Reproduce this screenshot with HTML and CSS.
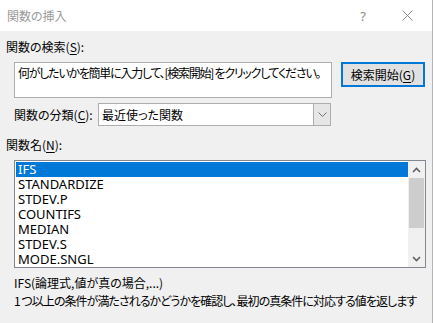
FILE: index.html
```html
<!DOCTYPE html>
<html lang="ja">
<head>
<meta charset="utf-8">
<title>関数の挿入</title>
<link rel="stylesheet" href="styles.css">
</head>
<body>
<div class="dialog">
  <div class="titlebar">
    <span class="title">関数の挿入</span>
    <span class="help">?</span>
    <span class="close">
      <svg width="11" height="11" viewBox="0 0 11 11"><path d="M0.5 0.5 L10.5 10.5 M10.5 0.5 L0.5 10.5" stroke="#8a8a8a" stroke-width="1" fill="none"/></svg>
    </span>
  </div>
  <div class="content">
    <div class="label">関数の検索(<u>S</u>):</div>
    <div class="search-row">
      <div class="textarea">何がしたいかを簡単に入力して、[検索開始] をクリックしてください。</div>
      <div class="button">検索開始(<u>G</u>)</div>
    </div>
    <div class="category-row">
      <span class="cat-label">関数の分類(<u>C</u>):</span>
      <div class="select">
        <span class="select-value">最近使った関数</span>
        <span class="select-btn">
          <svg width="9" height="6" viewBox="0 0 9 6"><path d="M0.5 0.5 L4.5 4.5 L8.5 0.5" stroke="#707070" stroke-width="1" fill="none"/></svg>
        </span>
      </div>
    </div>
    <div class="label label-list">関数名(<u>N</u>):</div>
    <div class="listbox">
      <ul class="items">
        <li class="selected">IFS</li>
        <li>STANDARDIZE</li>
        <li>STDEV.P</li>
        <li>COUNTIFS</li>
        <li>MEDIAN</li>
        <li>STDEV.S</li>
        <li>MODE.SNGL</li>
      </ul>
      <div class="scrollbar">
        <div class="arrow">
          <svg width="9" height="6" viewBox="0 0 9 6"><path d="M1 5 L4.5 1.5 L8 5" stroke="#606060" stroke-width="1.6" fill="none"/></svg>
        </div>
        <div class="thumb"></div>
        <div class="track"></div>
        <div class="arrow">
          <svg width="9" height="6" viewBox="0 0 9 6"><path d="M1 1 L4.5 4.5 L8 1" stroke="#606060" stroke-width="1.6" fill="none"/></svg>
        </div>
      </div>
    </div>
    <div class="desc">
      <div class="syntax">IFS(論理式,値が真の場合,...)</div>
      <div class="explain">1 つ以上の条件が満たされるかどうかを確認し、最初の真条件に対応する値を返します</div>
    </div>
  </div>
</div>
</body>
</html>
```

FILE: styles.css
```css
* { box-sizing: border-box; }
html, body {
  margin: 0;
  padding: 0;
  background: #f0f0f0;
}
body {
  font-family: "Noto Sans CJK JP", "Noto Sans", sans-serif;
  font-size: 12px;
  color: #000;
  font-feature-settings: "palt";
}
u { text-underline-offset: 2px; }
.dialog {
  width: 433px;
  height: 323px;
  background: #f0f0f0;
  border-right: 1px solid #b4b4b4;
  overflow: hidden;
}
.titlebar {
  height: 31px;
  background: #fff;
  display: flex;
  align-items: center;
  padding-left: 7px;
}
.title {
  color: #9a9a9a;
  line-height: 16px;
}
.help {
  margin-left: auto;
  color: #8a8a8a;
  font-family: "Noto Sans", sans-serif;
  font-size: 13px;
  margin-right: 36px;
}
.close {
  display: flex;
  margin-right: 19px;
}
.content {
  padding: 0 6px;
}
.label {
  margin-top: 8px;
  line-height: 16px;
  height: 16px;
}
.label-list {
  margin-top: 11px;
}
.search-row {
  display: flex;
  align-items: flex-start;
  margin-top: 7px;
  margin-left: 8px;
  gap: 9px;
}
.textarea {
  width: 318px;
  height: 36px;
  background: #fff;
  border: 1px solid #abadb3;
  padding: 2px 3px;
  line-height: 16px;
  white-space: nowrap;
  overflow: hidden;
  letter-spacing: -1.25px;
}
.button {
  width: 84px;
  height: 25px;
  background: #e1e1e1;
  border: 2px solid #0078d7;
  display: flex;
  align-items: center;
  justify-content: center;
  line-height: 16px;
}
.category-row {
  display: flex;
  align-items: center;
  margin-top: 5px;
  margin-left: 8px;
  height: 23px;
}
.cat-label {
  width: 84px;
  line-height: 16px;
}
.select {
  width: 233px;
  height: 23px;
  background: #fff;
  border: 1px solid #adadad;
  display: flex;
  align-items: stretch;
}
.select-value {
  flex: 1;
  padding-left: 3px;
  display: flex;
  align-items: center;
}
.select-btn {
  width: 17px;
  background: #e6e6e6;
  border-left: 1px solid #adadad;
  display: flex;
  align-items: center;
  justify-content: center;
}
.listbox {
  margin-top: 7px;
  margin-left: 8px;
  width: 412px;
  height: 108px;
  background: #fff;
  border: 1px solid #828790;
  display: flex;
}
.items {
  list-style: none;
  margin: 0;
  padding: 1px 0 0 1px;
  flex: 1;
  font-family: "Noto Sans", "Noto Sans CJK JP", sans-serif;
  font-size: 13px;
}
.items li {
  height: 15px;
  line-height: 15px;
  padding-left: 2px;
}
.items li.selected {
  background: #0078d7;
  color: #fff;
}
.scrollbar {
  width: 17px;
  background: #f0f0f0;
  display: flex;
  flex-direction: column;
  align-items: center;
}
.arrow {
  height: 17px;
  display: flex;
  align-items: center;
  justify-content: center;
}
.thumb {
  width: 15px;
  height: 50px;
  background: #cdcdcd;
}
.track {
  flex: 1;
}
.desc {
  margin-top: 6px;
  margin-left: 8px;
}
.syntax, .explain {
  line-height: 18px;
  white-space: nowrap;
}
.explain {
  letter-spacing: -0.95px;
}
```
